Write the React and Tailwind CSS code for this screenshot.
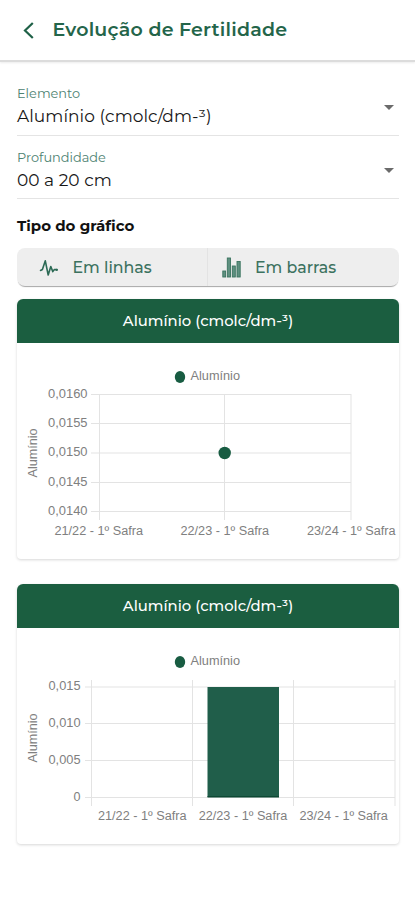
import { useState } from "react";

const HARVESTS = ["21/22 - 1º Safra", "22/23 - 1º Safra", "23/24 - 1º Safra"];

function SelectField({ label, value }) {
  return (
    <button
      type="button"
      className="flex h-[63.5px] w-full items-center justify-between border-b border-[#e4e4e4] text-left"
    >
      <span className="flex flex-col pt-[7.5px]">
        <span className="text-[12.9px] leading-[18px] text-[#4d8271]">{label}</span>
        <span className="text-[17px] leading-[26px] tracking-[0.05px] text-[#161616]">{value}</span>
      </span>
      <svg width="10" height="5" viewBox="0 0 10 5" className="mt-2 mr-[5px]">
        <path d="M0 0h10L5 5z" fill="#6b6b6b" />
      </svg>
    </button>
  );
}

function PulseIcon() {
  return (
    <svg width="20" height="18" viewBox="0 0 20 18" fill="none" stroke="#2c6a55" strokeWidth="1.6" strokeLinejoin="round" strokeLinecap="round">
      <path d="M1.5 11.5L3.4 10.5 6.3 1.8 9.2 16 11.8 7.5 13.8 12.6 15.2 10.6H18" />
      <circle cx="17.8" cy="10.9" r="1.1" fill="#2c6a55" stroke="none" />
    </svg>
  );
}

function BarsIcon() {
  return (
    <svg width="19" height="21" viewBox="0 0 19 21" fill="#5f9080" stroke="#3a735f" strokeWidth="0.9">
      <rect x="0.8" y="14" width="2.8" height="6" />
      <rect x="5.3" y="1" width="3.2" height="19" />
      <rect x="10.3" y="9" width="3" height="11" />
      <rect x="15" y="4.5" width="3.2" height="15.5" />
    </svg>
  );
}

function ChartCard({ title, children }) {
  return (
    <section className="overflow-hidden rounded-t-md rounded-b-sm bg-white shadow-[0_1px_3px_rgba(0,0,0,0.16)]">
      <h2 className="flex h-11 items-center justify-center bg-[#1b5e40] text-[14.8px] font-medium text-white">
        {title}
      </h2>
      {children}
    </section>
  );
}

function Legend() {
  return (
    <>
      <ellipse cx="163" cy="34" rx="5.2" ry="6" fill="#185c42" />
      <text x="173.5" y="37" textLength="49.5" lengthAdjust="spacingAndGlyphs">Alumínio</text>
      <text transform="translate(20 134.5) rotate(-90)" textLength="49" lengthAdjust="spacingAndGlyphs">Alumínio</text>
    </>
  );
}

function LineChart() {
  const columns = [82.5, 207.5, 334];
  const rows = [
    ["0,0160", 51.5],
    ["0,0155", 80.5],
    ["0,0150", 110],
    ["0,0145", 139.5],
    ["0,0140", 168.5],
  ];

  return (
    <svg width="381" height="216" viewBox="0 0 381 216" className="block text-[12px]" fill="#808080">
      <g stroke="#e3e3e3" strokeWidth="1">
        {rows.map(([label, y]) => (
          <line key={label} x1="74" x2="334" y1={y} y2={y} />
        ))}
        {columns.map((x) => (
          <line key={x} x1={x} x2={x} y1="51" y2="177" />
        ))}
      </g>
      <g fontFamily="Liberation Sans, sans-serif">
        <Legend />
        {rows.map(([label, y]) => (
          <text key={label} x="31" y={y + 3} textLength="39.5" lengthAdjust="spacingAndGlyphs">{label}</text>
        ))}
        {columns.map((x, i) => (
          <text key={x} x={[37.5, 163.5, 290][i]} y="191.5" textLength="88.5" lengthAdjust="spacingAndGlyphs">{HARVESTS[i]}</text>
        ))}
      </g>
      <circle cx="207.7" cy="110" r="6.2" fill="#185c42" />
    </svg>
  );
}

function BarChart() {
  const rows = [
    ["0,015", 59],
    ["0,010", 95.5],
    ["0,005", 132.5],
    ["0", 169.5],
  ];

  return (
    <svg width="381" height="216" viewBox="0 0 381 216" className="block text-[12px]" fill="#808080">
      <g stroke="#e3e3e3" strokeWidth="1">
        {rows.map(([label, y]) => (
          <line key={label} x1="68" x2="378" y1={y} y2={y} />
        ))}
        {[74.5, 175.5, 276.5, 378].map((x) => (
          <line key={x} x1={x} x2={x} y1="52" y2="178" />
        ))}
      </g>
      <rect x="190.5" y="59" width="71.5" height="110" fill="#205e4a" />
      <rect x="190.5" y="168" width="71.5" height="1.5" fill="#0d4934" />
      <g fontFamily="Liberation Sans, sans-serif">
        <Legend />
        {rows.map(([label, y]) => (
          <text
            key={label}
            x="63.5"
            y={y + 3}
            textAnchor="end"
            textLength={label === "0" ? 7 : 32}
            lengthAdjust="spacingAndGlyphs"
          >
            {label}
          </text>
        ))}
        {HARVESTS.map((harvest, i) => (
          <text key={harvest} x={81 + i * 100.7} y="191.5" textLength="88.5" lengthAdjust="spacingAndGlyphs">{harvest}</text>
        ))}
      </g>
    </svg>
  );
}

export default function App() {
  const [, setChartType] = useState("linhas");

  return (
    <div className="h-[900px] w-full overflow-hidden bg-white font-['Montserrat','Inter',sans-serif]">
      {/* Header */}
      <header className="flex h-[62px] items-center border-b-2 border-[#dcdcdc] pl-[23px] shadow-[0_1px_2px_rgba(0,0,0,0.08)]">
        <button type="button" aria-label="Voltar">
          <svg width="11" height="17" viewBox="0 0 11 17" fill="none" stroke="#1f6147" strokeWidth="2.2">
            <path d="M9.8 1L2 8.5 9.8 16" />
          </svg>
        </button>
        <h1 className="ml-[18.5px] pt-px text-[19px] font-semibold tracking-[0.2px] text-[#24654a]">
          Evolução de Fertilidade
        </h1>
      </header>

      <main className="flex flex-col pr-4 pl-[17px] pt-[10px]">
        <SelectField label="Elemento" value="Alumínio (cmolc/dm-³)" />
        <SelectField label="Profundidade" value="00 a 20 cm" />

        {/* Chart type */}
        <h3 className="mt-[17px] text-[15px] leading-5 font-bold text-[#111]">Tipo do gráfico</h3>
        <div className="mt-[12px] flex h-[38px] rounded-lg bg-[#eeeeee] shadow-[0_2px_1px_-1px_rgba(0,0,0,0.35)]">
          <button
            type="button"
            onClick={() => setChartType("linhas")}
            className="flex w-[191px] items-center gap-[13.5px] border-r border-[#e3e3e3] pl-[22px] pt-px text-[15.8px] font-medium text-[#3c725f]"
          >
            <PulseIcon />
            Em linhas
          </button>
          <button
            type="button"
            onClick={() => setChartType("barras")}
            className="flex flex-1 items-center gap-3.5 pl-3.5 pt-px text-[15.8px] font-medium text-[#3c725f]"
          >
            <BarsIcon />
            Em barras
          </button>
        </div>

        {/* Charts */}
        <div className="mt-[13px] flex flex-col gap-[25px]">
          <ChartCard title="Alumínio (cmolc/dm-³)">
            <LineChart />
          </ChartCard>
          <ChartCard title="Alumínio (cmolc/dm-³)">
            <BarChart />
          </ChartCard>
        </div>
      </main>
    </div>
  );
}
